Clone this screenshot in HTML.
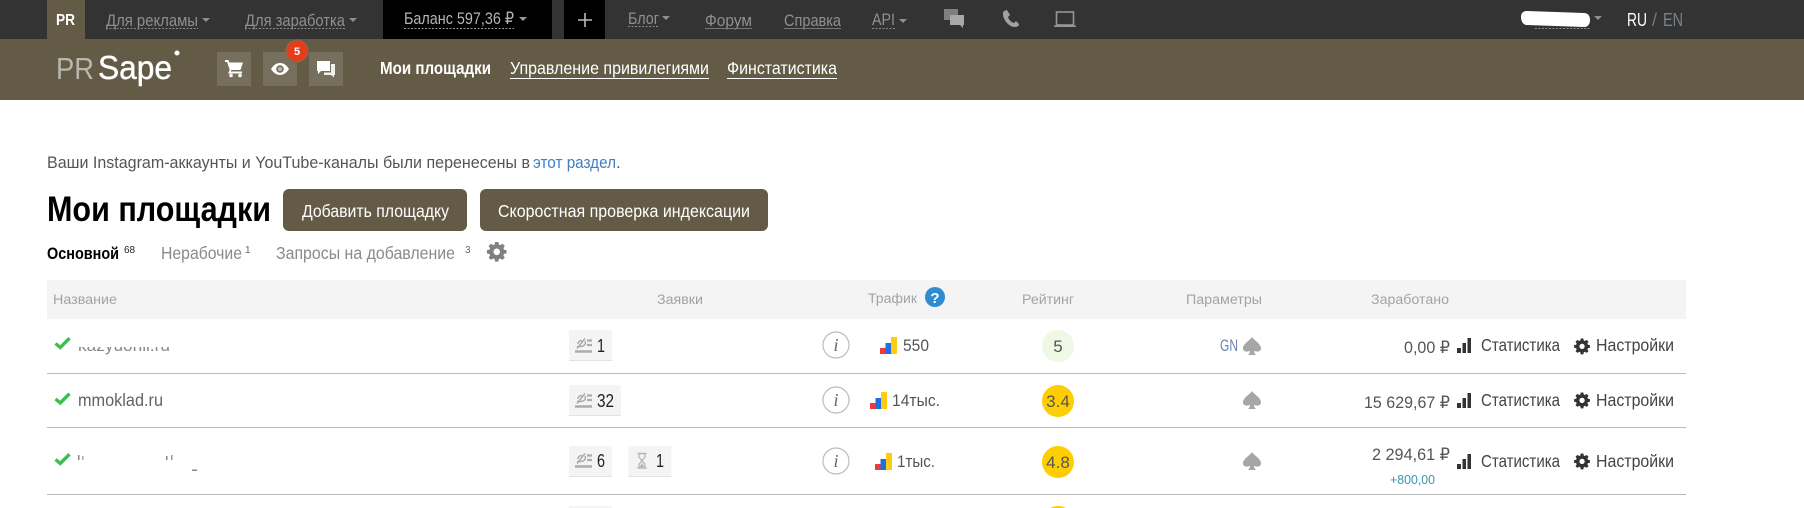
<!DOCTYPE html>
<html lang="ru">
<head>
<meta charset="utf-8">
<title>Мои площадки</title>
<style>
html,body{margin:0;padding:0;background:#fff;width:1804px;height:508px;overflow:hidden}
svg{display:block}
text{font-family:"Liberation Sans","DejaVu Sans",sans-serif}
.top{font-size:16.500px;fill:#8f8f8f}
.nav{font-size:17.500px;fill:#fff}
.body{font-size:17px;fill:#555}
.th{font-size:13.500px;fill:#a3a3a3}
.cell{font-size:17px;fill:#555}
.dark{font-size:17.500px;fill:#444}
.num{font-size:18px;fill:#222}
</style>
</head>
<body>
<svg width="1804" height="508" viewBox="0 0 1804 508" xmlns="http://www.w3.org/2000/svg">
<defs>
<g id="bars"><rect x="0" y="11" width="6" height="6" fill="#f03a3a"/><rect x="5.500" y="6" width="6" height="11" fill="#1f6fe0"/><rect x="11" y="0" width="6" height="17" fill="#ffcc11"/></g>
<path id="spade" fill="#a6a6a6" d="M9 0C7 3.500 0 6.500 0 11.500c0 3 4 4 7 2.300C7 15.500 6.300 17 5 18h8c-1.300-1-2-2.500-2-4.200 3 1.700 7 .7 7-2.300C18 6.500 11 3.500 9 0z"/>
<g id="stat" fill="#333"><rect x="0" y="10" width="4" height="5"/><rect x="5.500" y="5" width="3.500" height="10"/><rect x="10.500" y="0" width="3.500" height="15"/></g>
<path id="gear" fill-rule="evenodd" d="M6.500 0h3l.4 2.300 1.400.6L13.300 1.600l2.100 2.100-1.300 2 .6 1.400 2.300.4v3l-2.300.4-.6 1.400 1.300 2-2.100 2.100-2-1.300-1.400.6-.4 2.300h-3l-.4-2.300-1.400-.6-2 1.300L.6 14.300l1.300-2-.6-1.400L-1 10.500v-3l2.300-.4.6-1.400-1.300-2L2.700 1.600l2 1.300 1.400-.6zM8 6a3 3 0 1 0 .01 0z"/>
<g id="req" fill="none" stroke="#ababab"><path d="M0 13.500h17" stroke-width="2.400"/><path d="M2 10.500l8-10" stroke-width="1.500"/><path d="M3 6c0-2.200 1.800-3.500 4-3.500M10 3c1.200 2.500-.3 5-3.500 5.500H2" stroke-width="1.500"/><path d="M12 2.500h5M12 7h5" stroke-width="2.200"/></g>
<path id="check" fill="none" stroke="#3cc04a" stroke-width="3.400" d="M1.500 6.500 6.300 10.500 15.500 1.200"/>
<g id="info"><circle cx="0" cy="0" r="13" fill="#fff" stroke="#bcbcbc" stroke-width="1.200"/><text x="0" y="6" text-anchor="middle" font-size="18" font-style="italic" fill="#666" style="font-family:'Liberation Serif',serif">i</text></g>
</defs>

<rect width="1804" height="508" fill="#fff"/>

<!-- top bar -->
<rect width="1804" height="39" fill="#333"/>
<rect x="47" width="38" height="39" fill="#635b46"/>
<text x="56" y="25" font-size="16" font-weight="700" fill="#fff" textLength="19" lengthAdjust="spacingAndGlyphs">PR</text>
<text class="top" x="106" y="26" textLength="92" lengthAdjust="spacingAndGlyphs">Для рекламы</text>
<path d="M106 28.500h92" stroke="#8a8a8a" stroke-dasharray="2 1.500"/>
<path d="M202 18h8l-4 4z" fill="#8f8f8f"/>
<text class="top" x="245" y="26" textLength="100" lengthAdjust="spacingAndGlyphs">Для заработка</text>
<path d="M245 28.500h100" stroke="#8a8a8a" stroke-dasharray="2 1.500"/>
<path d="M349 18h8l-4 4z" fill="#8f8f8f"/>

<rect x="383" width="169" height="39" fill="#000"/>
<text x="404" y="24" font-size="16.500" fill="#b5b5b5" textLength="110" lengthAdjust="spacingAndGlyphs">Баланс 597,36 ₽</text>
<path d="M404 28.500h110" stroke="#999" stroke-dasharray="2 1.500"/>
<path d="M519 17h8l-4 4z" fill="#9a9a9a"/>
<rect x="564" width="41" height="39" fill="#000"/>
<path d="M585 13v14M578 20h14" stroke="#bbb" stroke-width="1.600"/>

<text class="top" x="628" y="24" textLength="31" lengthAdjust="spacingAndGlyphs">Блог</text>
<path d="M628 26.500h31" stroke="#8a8a8a" stroke-dasharray="2 1.500"/>
<path d="M662 16h8l-4 4z" fill="#8f8f8f"/>
<text class="top" x="705" y="26" textLength="47" lengthAdjust="spacingAndGlyphs">Форум</text>
<path d="M705 28.500h47" stroke="#777"/>
<text class="top" x="784" y="26" textLength="57" lengthAdjust="spacingAndGlyphs">Справка</text>
<path d="M784 28.500h57" stroke="#777"/>
<text class="top" x="872" y="25" textLength="23" lengthAdjust="spacingAndGlyphs">API</text>
<path d="M872 28.500h23" stroke="#8a8a8a" stroke-dasharray="2 1.500"/>
<path d="M899 19h8l-4 4z" fill="#8f8f8f"/>

<!-- top icons -->
<rect x="944" y="9" width="14" height="11" fill="#7f7f7f"/>
<path d="M950 15h14v10h-1v3l-3-3h-10z" fill="#a8a8a8"/>
<path d="M1004 11l3-1 3 5-2 2c1 3 3 5 6 6l2-2 3 3c0 2-2 3-4 3-6 0-12-7-12-13 0-1 0-2 1-3z" fill="#a0a0a0"/>
<rect x="1056.500" y="12" width="17" height="13" fill="none" stroke="#969696" stroke-width="1.600"/>
<path d="M1054 25.500h22v1.500h-22z" fill="#969696"/>

<!-- user -->
<path d="M1521 17c0-4 2-6 6-6l57 2c4 0 6 3 6 7s-2 7-6 7l-57-2c-4 0-6-4-6-8z" fill="#fff"/>
<path d="M1535 28.500h55" stroke="#8a8a8a" stroke-dasharray="2 1.500"/>
<path d="M1594 16h8l-4 4z" fill="#8f8f8f"/>
<text x="1627" y="26" font-size="18" fill="#fff" textLength="20" lengthAdjust="spacingAndGlyphs">RU</text>
<text x="1652" y="26" font-size="18" fill="#777">/</text>
<text x="1663" y="26" font-size="18" fill="#7a8288" textLength="20" lengthAdjust="spacingAndGlyphs">EN</text>

<!-- brown bar -->
<rect y="39" width="1804" height="61" fill="#635b46"/>
<text x="56" y="79" font-size="31" fill="#b9b6ad" textLength="38" lengthAdjust="spacingAndGlyphs">PR</text>
<text x="98" y="79" font-size="33" fill="#fff" stroke="#fff" stroke-width=".4" textLength="74" lengthAdjust="spacingAndGlyphs">Sape</text>
<circle cx="177" cy="53" r="2.500" fill="#fff"/>

<rect x="217" y="52" width="34" height="34" fill="#766f5d"/>
<rect x="263" y="52" width="34" height="34" fill="#766f5d"/>
<rect x="309" y="52" width="34" height="34" fill="#766f5d"/>
<path d="M225 60h3.500l.8 2.500H243l-2.600 7.500h-9l-.7 1.500H242v2h-14l1.800-3.500L227 62h-2z" fill="#fff"/>
<circle cx="231" cy="75.500" r="1.800" fill="#fff"/><circle cx="240" cy="75.500" r="1.800" fill="#fff"/>
<path d="M271 69c2.500-4 5.500-6 9-6s6.500 2 9 6c-2.500 4-5.500 6-9 6s-6.500-2-9-6z" fill="#fff"/>
<circle cx="280" cy="69" r="3.800" fill="#766f5d"/><circle cx="280" cy="69" r="2" fill="#fff" opacity=".5"/>
<path d="M317 61h13v10h-9l-3 3v-3h-1z" fill="#fff"/>
<path d="M331 64h4v11h-1v2.500l-3-2.500h-7v-2.500h7z" fill="#fff" opacity=".9"/>
<circle cx="297" cy="51" r="11" fill="#e43d1a" stroke="#8a6a4e" stroke-width="1"/>
<text x="297" y="55" font-size="11" font-weight="700" fill="#fff" text-anchor="middle">5</text>

<text class="nav" x="380" y="74" font-weight="700" textLength="111" lengthAdjust="spacingAndGlyphs">Мои площадки</text>
<text class="nav" x="510" y="74" textLength="199" lengthAdjust="spacingAndGlyphs">Управление привилегиями</text>
<path d="M510 78.500h199" stroke="#fff" stroke-width="1"/>
<text class="nav" x="727" y="74" textLength="110" lengthAdjust="spacingAndGlyphs">Финстатистика</text>
<path d="M727 78.500h110" stroke="#fff" stroke-width="1"/>

<!-- notice -->
<text class="body" x="47" y="168" textLength="483" lengthAdjust="spacingAndGlyphs">Ваши Instagram-аккаунты и YouTube-каналы были перенесены в</text>
<text x="533" y="168" font-size="17" fill="#3f7fc4" textLength="83" lengthAdjust="spacingAndGlyphs">этот раздел</text>
<text class="body" x="616" y="168">.</text>

<!-- heading -->
<text x="47" y="221" font-size="35" font-weight="700" fill="#000" textLength="224" lengthAdjust="spacingAndGlyphs">Мои площадки</text>
<rect x="283" y="189" width="184" height="42" rx="6" fill="#635b46"/>
<text x="302" y="217" font-size="17.500" fill="#fff" textLength="147" lengthAdjust="spacingAndGlyphs">Добавить площадку</text>
<rect x="480" y="189" width="288" height="42" rx="6" fill="#635b46"/>
<text x="498" y="217" font-size="17.500" fill="#fff" textLength="252" lengthAdjust="spacingAndGlyphs">Скоростная проверка индексации</text>

<!-- tabs -->
<text x="47" y="259" font-size="17" font-weight="700" fill="#000" textLength="72" lengthAdjust="spacingAndGlyphs">Основной</text>
<text x="124" y="253" font-size="10" fill="#222">68</text>
<text x="161" y="259" font-size="17.500" fill="#8a8a8a" textLength="81" lengthAdjust="spacingAndGlyphs">Нерабочие</text>
<text x="245" y="253" font-size="10" fill="#666">1</text>
<text x="276" y="259" font-size="17.500" fill="#8a8a8a" textLength="179" lengthAdjust="spacingAndGlyphs">Запросы на добавление</text>
<text x="465" y="253" font-size="10" fill="#666">3</text>
<use href="#gear" transform="translate(488,242) scale(1.090)" fill="#808080"/>

<!-- table header -->
<rect x="47" y="280" width="1639" height="39" fill="#f4f4f4"/>
<text class="th" x="53" y="304" textLength="64" lengthAdjust="spacingAndGlyphs">Название</text>
<text class="th" x="657" y="304" textLength="46" lengthAdjust="spacingAndGlyphs">Заявки</text>
<text class="th" x="868" y="303" textLength="49" lengthAdjust="spacingAndGlyphs">Трафик</text>
<circle cx="935" cy="297" r="10" fill="#2f8cd0"/>
<text x="935" y="303" font-size="15" font-weight="700" fill="#fff" text-anchor="middle">?</text>
<text class="th" x="1022" y="304" textLength="52" lengthAdjust="spacingAndGlyphs">Рейтинг</text>
<text class="th" x="1186" y="304" textLength="76" lengthAdjust="spacingAndGlyphs">Параметры</text>
<text class="th" x="1371" y="304" textLength="78" lengthAdjust="spacingAndGlyphs">Заработано</text>

<!-- row lines -->
<rect x="47" y="373" width="1639" height="1" fill="#bbb"/>
<rect x="47" y="427" width="1639" height="1" fill="#bbb"/>
<rect x="47" y="494" width="1639" height="1" fill="#bbb"/>

<!-- checks -->
<use href="#check" x="54" y="337"/>
<use href="#check" x="54" y="392.500"/>
<use href="#check" x="54" y="453"/>

<!-- names -->
<text x="78" y="351" font-size="17" fill="#888" textLength="92" lengthAdjust="spacingAndGlyphs">kazyuonil.ru</text>
<rect x="74" y="334" width="104" height="13" fill="#fff"/>
<text x="78" y="406" font-size="17.500" fill="#5f6368" textLength="85" lengthAdjust="spacingAndGlyphs">mmoklad.ru</text>
<rect x="78" y="455" width="1.500" height="5" fill="#888"/>
<rect x="82" y="456" width="1.500" height="4" fill="#aaa"/>
<rect x="166" y="456" width="1.500" height="4" fill="#888"/>
<rect x="171" y="455" width="1.500" height="5" fill="#999"/>
<rect x="192" y="469.500" width="5" height="1.500" fill="#888"/>

<!-- request badges -->
<rect x="569" y="330" width="43" height="31" rx="2" fill="#f4f4f4"/>
<rect x="569" y="360" width="43" height="1" fill="#e2e2e2"/>
<use href="#req" x="575" y="338"/>
<text class="num" x="597" y="352" textLength="8" lengthAdjust="spacingAndGlyphs">1</text>
<rect x="569" y="385" width="52" height="31" rx="2" fill="#f4f4f4"/>
<rect x="569" y="415" width="52" height="1" fill="#e2e2e2"/>
<use href="#req" x="575" y="393"/>
<text class="num" x="597" y="407" textLength="17" lengthAdjust="spacingAndGlyphs">32</text>
<rect x="569" y="446" width="43" height="31" rx="2" fill="#f4f4f4"/>
<rect x="569" y="476" width="43" height="1" fill="#e2e2e2"/>
<use href="#req" x="575" y="453"/>
<text class="num" x="597" y="467" textLength="8" lengthAdjust="spacingAndGlyphs">6</text>
<rect x="628.500" y="446" width="43" height="31" rx="2" fill="#f4f4f4"/>
<rect x="628.500" y="476" width="43" height="1" fill="#e2e2e2"/>
<path d="M637.500 453.500h9M637.500 468h9" fill="none" stroke="#b3b3b3" stroke-width="1.600"/>
<path d="M639 454v3l3 3.700-3 3.700v3.500M645 454v3l-3 3.700 3 3.700v3.500" fill="none" stroke="#b3b3b3" stroke-width="1.200"/>
<path d="M639.500 467l2.500-4 2.500 4z" fill="#b3b3b3"/>
<text class="num" x="656" y="467" textLength="8" lengthAdjust="spacingAndGlyphs">1</text>
<rect x="569" y="506" width="43" height="2" fill="#f4f4f4"/>

<!-- info -->
<use href="#info" x="836" y="345"/>
<use href="#info" x="836" y="400"/>
<use href="#info" x="836" y="461"/>

<!-- traffic -->
<use href="#bars" x="880" y="337"/>
<text class="cell" x="903" y="351" textLength="26" lengthAdjust="spacingAndGlyphs">550</text>
<use href="#bars" x="870" y="392"/>
<text class="cell" x="892" y="406" textLength="48" lengthAdjust="spacingAndGlyphs">14тыс.</text>
<use href="#bars" x="875" y="453"/>
<text class="cell" x="897" y="467" textLength="38" lengthAdjust="spacingAndGlyphs">1тыс.</text>

<!-- rating -->
<circle cx="1058" cy="346" r="16" fill="#eef8e4"/>
<text class="cell" x="1058" y="352" text-anchor="middle">5</text>
<circle cx="1058" cy="401" r="16" fill="#ffce00"/>
<text class="cell" x="1058" y="407" text-anchor="middle">3.4</text>
<circle cx="1058" cy="462" r="16" fill="#ffce00"/>
<text class="cell" x="1058" y="468" text-anchor="middle">4.8</text>
<path d="M1050.250 508A16 16 0 0 1 1065.750 508Z" fill="#ffce00"/>

<!-- params -->
<text x="1220" y="351" font-size="16.500" fill="#6a86b8" textLength="18" lengthAdjust="spacingAndGlyphs">GN</text>
<use href="#spade" x="1243" y="337"/>
<use href="#spade" x="1243" y="391"/>
<use href="#spade" x="1243" y="452"/>

<!-- earned -->
<text class="cell" x="1404" y="353" textLength="46" lengthAdjust="spacingAndGlyphs">0,00 ₽</text>
<text class="cell" x="1364" y="408" textLength="86" lengthAdjust="spacingAndGlyphs">15 629,67 ₽</text>
<text class="cell" x="1372" y="460" textLength="78" lengthAdjust="spacingAndGlyphs">2 294,61 ₽</text>
<text x="1390" y="484" font-size="12.500" fill="#3a95b0" textLength="45" lengthAdjust="spacingAndGlyphs">+800,00</text>

<!-- actions -->
<use href="#stat" x="1457" y="338"/>
<text class="dark" x="1481" y="351" textLength="79" lengthAdjust="spacingAndGlyphs">Статистика</text>
<use href="#gear" transform="translate(1575,338.500) scale(.88)" fill="#333"/>
<text class="dark" x="1596" y="351" textLength="78" lengthAdjust="spacingAndGlyphs">Настройки</text>

<use href="#stat" x="1457" y="393"/>
<text class="dark" x="1481" y="406" textLength="79" lengthAdjust="spacingAndGlyphs">Статистика</text>
<use href="#gear" transform="translate(1575,392.500) scale(.88)" fill="#333"/>
<text class="dark" x="1596" y="406" textLength="78" lengthAdjust="spacingAndGlyphs">Настройки</text>

<use href="#stat" x="1457" y="454"/>
<text class="dark" x="1481" y="467" textLength="79" lengthAdjust="spacingAndGlyphs">Статистика</text>
<use href="#gear" transform="translate(1575,453.500) scale(.88)" fill="#333"/>
<text class="dark" x="1596" y="467" textLength="78" lengthAdjust="spacingAndGlyphs">Настройки</text>
</svg>
</body>
</html>
